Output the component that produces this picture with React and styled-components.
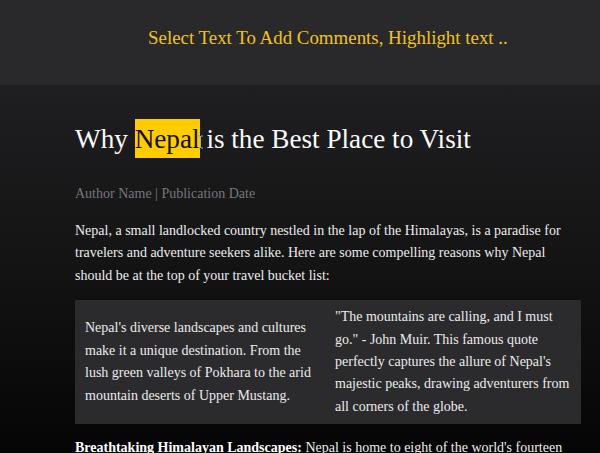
import styled, { createGlobalStyle } from 'styled-components';

const GlobalStyle = createGlobalStyle`
  html, body {
    margin: 0;
    padding: 0;
    background: #0b0b0c;
  }
  body {
    font-family: 'Liberation Serif', 'Times New Roman', serif;
    color: #f2f2f2;
  }
`;

const Page = styled.div`
  height: 453px;
  background: linear-gradient(180deg, #1f1f21 85px, #141415 260px, #050505 453px);
  overflow: hidden;
`;

const TopBar = styled.header`
  height: 85px;
  background: #29292b;
  box-sizing: border-box;
  padding: 26px 0 0 148px;
`;

const Hint = styled.h3`
  margin: 0;
  font-weight: 400;
  font-size: 18.9px;
  line-height: 24px;
  color: #f2c31c;
`;

const Article = styled.article`
  width: 506px;
  margin-left: 75px;
  padding-top: 34px;
`;

const Title = styled.h1`
  margin: 0;
  font-weight: 400;
  font-size: 27.2px;
  line-height: 36px;
  color: #fafafa;
  display: flex;
  align-items: center;
  white-space: pre;
`;

const Mark = styled.span`
  background: #ffcc00;
  color: #111;
  padding: 1.5px 0;
`;

const Caret = styled.svg`
  width: 7px;
  height: 14px;
  margin: 6px -4px 0 -3px;
`;

const Meta = styled.p`
  margin: 25px 0 0;
  font-size: 14px;
  line-height: 22px;
  color: #777779;
`;

const Text = styled.p`
  margin: ${({ $top }) => $top || '15px'} 0 0;
  font-size: 14px;
  line-height: 22.4px;
  color: #ededed;

  strong {
    font-weight: 700;
    color: #fff;
  }
`;

const Split = styled.section`
  margin-top: 13px;
  background: #2b2b2d;
  padding: 6px 10px;
  display: grid;
  grid-template-columns: 1fr 1fr;
  column-gap: 14px;
  align-items: center;
`;

const Cell = styled.p`
  margin: 0;
  font-size: 14px;
  line-height: 22.4px;
  color: #ececec;
`;

export default function App() {
  return (
    <>
      <GlobalStyle />
      <Page>
        <TopBar>
          <Hint>Select Text To Add Comments, Highlight text ..</Hint>
        </TopBar>
        <Article>
          <Title>
            Why <Mark>Nepal</Mark>
            <Caret viewBox="0 0 7 14">
              <path d="M1 1h2l0.5 1 0.5-1h2M3.5 2v10M1 13h2l0.5-1 0.5 1h2" stroke="#aaa" strokeWidth="1" fill="none" />
            </Caret>
            {' is the Best Place to Visit'}
          </Title>
          <Meta>Author Name | Publication Date</Meta>
          <Text>
            Nepal, a small landlocked country nestled in the lap of the Himalayas, is a paradise for
            travelers and adventure seekers alike. Here are some compelling reasons why Nepal
            should be at the top of your travel bucket list:
          </Text>
          <Split>
            <Cell>
              Nepal's diverse landscapes and cultures make it a unique destination. From the lush
              green valleys of Pokhara to the arid mountain deserts of Upper Mustang.
            </Cell>
            <Cell>
              "The mountains are calling, and I must go." - John Muir. This famous quote perfectly
              captures the allure of Nepal's majestic peaks, drawing adventurers from all corners of
              the globe.
            </Cell>
          </Split>
          <Text $top="13px">
            <strong>Breathtaking Himalayan Landscapes:</strong> Nepal is home to eight of the world's
            fourteen highest peaks, including Mount Everest, the tallest mountain on Earth.
          </Text>
        </Article>
      </Page>
    </>
  );
}
